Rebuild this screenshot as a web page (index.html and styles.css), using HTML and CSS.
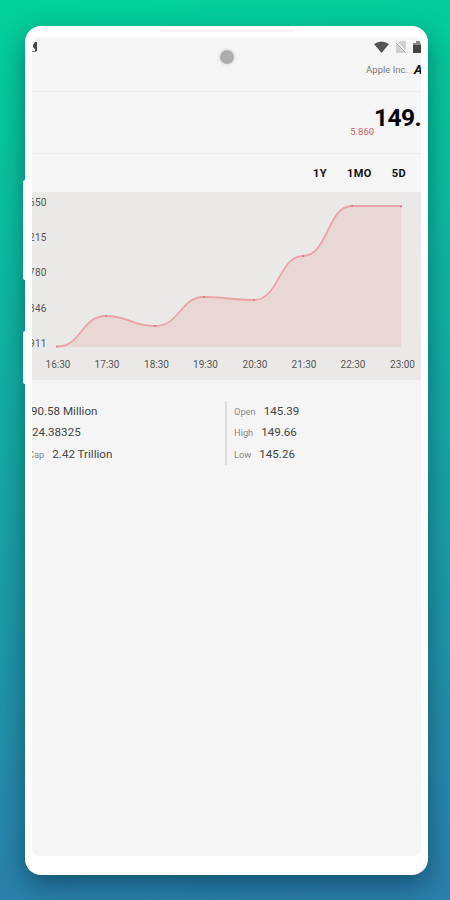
FILE: index.html
```html
<!DOCTYPE html>
<html lang="en">
<head>
    <meta charset="UTF-8">
    <meta name="viewport" content="width=device-width, initial-scale=1.0">
    <title>Stocks</title>
    <link rel="stylesheet" href="styles.css">
</head>
<body>
    <div class="phone">
        <span class="side-button volume"></span>
        <span class="side-button power"></span>
        <span class="speaker"></span>
        <span class="camera"></span>
        <div class="screen">
            <div class="topbar">
                <div class="status">
                    <svg class="clock" width="6" height="12" viewBox="0 0 6 12"><path d="M3 1h2v9L3 11V8L1 6V4z" fill="#444"/><path d="M0 10h3v1H0z" fill="#777"/></svg>
                    <div class="status-icons">
                        <svg width="15" height="12" viewBox="0 0 15 12"><path d="M0 3Q7.500-2 15 3L7.500 12z" fill="#555"/></svg>
                        <svg width="10" height="12" viewBox="0 0 10 12"><path d="M4 0h6v12H0V4z" fill="#d0d0d0"/><path d="M0 1l10 10" stroke="#f4f4f4" stroke-width="2"/><path d="M0 2l9 9" stroke="#a5a5a5"/></svg>
                        <svg width="8" height="12" viewBox="0 0 8 12"><path d="M3 0h4v2h1v10H0V2h3z" fill="#888"/><path d="M0 4h8v8H0z" fill="#444"/></svg>
                    </div>
                </div>
                <div class="company">
                    <span class="company-name">Apple Inc.</span>
                    <b class="symbol">A</b>
                </div>
            </div>
            <div class="quote">
                <span class="change">5.860</span>
                <b class="price">149.</b>
            </div>
            <div class="ranges">
                <span>1Y</span>
                <span>1MO</span>
                <span>5D</span>
            </div>
            <svg class="chart" width="389" height="188" viewBox="0 0 389 188">
                <path class="area" d="M25 155C50 155 49 124 74 124C98 124 98 134 123 134C148 134 148 105 172 105C197 105 197 108 222 108C247 108 247 64 271 64C296 64 295 14 320 14H369V155z"/>
                <path class="line" d="M25 154.500C50 154.500 49 124 74 124C98 124 98 134 123 134C148 134 148 105 172 105C197 105 197 108 222 108C247 108 247 64 271 64C296 64 295 14 320 14H370"/>
                <g class="dots">
                    <circle cx="25" cy="154.500" r="1"/>
                    <circle cx="74" cy="124" r="1"/>
                    <circle cx="123" cy="134" r="1"/>
                    <circle cx="172" cy="105" r="1"/>
                    <circle cx="222" cy="108" r="1"/>
                    <circle cx="271" cy="64" r="1"/>
                    <circle cx="320" cy="14" r="1"/>
                    <circle cx="369" cy="14.500" r="1"/>
                </g>
                <g class="y-labels">
                    <text x="-3" y="14">650</text>
                    <text x="-3" y="49">215</text>
                    <text x="-3" y="84">780</text>
                    <text x="-3" y="120">346</text>
                    <text x="-3" y="155">911</text>
                </g>
                <g class="x-labels">
                    <text x="26" y="175.500">16:30</text>
                    <text x="75" y="175.500">17:30</text>
                    <text x="124.500" y="175.500">18:30</text>
                    <text x="173.500" y="175.500">19:30</text>
                    <text x="223" y="175.500">20:30</text>
                    <text x="272" y="175.500">21:30</text>
                    <text x="321" y="175.500">22:30</text>
                    <text x="370.500" y="175.500">23:00</text>
                </g>
            </svg>
            <div class="stats">
                <div class="stats-left">
                    <div class="stat first">90.58 Million</div>
                    <div class="stat">24.38325</div>
                    <div class="stat cap"><span class="label">Cap</span>2.42 Trillion</div>
                </div>
                <div class="stats-right">
                    <div class="stat"><span class="label">Open</span>145.39</div>
                    <div class="stat"><span class="label">High</span>149.66</div>
                    <div class="stat"><span class="label">Low</span>145.26</div>
                </div>
            </div>
        </div>
    </div>
</body>
</html>
```
FILE: styles.css
```css
* {
    box-sizing: border-box;
}
body {
    margin: 0;
    height: 900px;
    padding: 26px 22px 25px 25px;
    overflow: hidden;
    background: linear-gradient(175deg, #02d199 0%, #04cb9b 8%, #2b7eac 98%);
    font-family: Roboto, 'Liberation Sans', sans-serif;
    color: #333;
}
.phone {
    position: relative;
    height: 849px;
    padding: 11px 7px 19px;
    border-radius: 16px;
    background: #fff;
    box-shadow: 0 10px 26px rgba(0, 40, 60, 0.5);
}
.side-button {
    position: absolute;
    left: -2px;
    width: 3px;
    background: #f8fbfa;
    border-radius: 2px 0 0 2px;
}
.volume {
    top: 154px;
    height: 100px;
}
.power {
    top: 305px;
    height: 53px;
}
.speaker {
    position: absolute;
    top: 4px;
    left: 135px;
    width: 134px;
    height: 2px;
    border-radius: 2px;
    background: #f5f5f5;
}
.camera {
    position: absolute;
    top: 24px;
    left: 195px;
    width: 14px;
    height: 14px;
    border-radius: 50%;
    background: #adadad;
    box-shadow: 0 0 0 2px #e9e9e9;
}
.screen {
    height: 819px;
    width: 389px;
    overflow: hidden;
    border-radius: 8px;
    background: #f5f5f5;
}
.topbar {
    height: 55px;
    padding-top: 4px;
    border-bottom: 1px solid #ececec;
}
.status {
    display: flex;
    justify-content: space-between;
    height: 12px;
}
.status-icons {
    display: flex;
    gap: 7px;
}
.company {
    display: flex;
    justify-content: flex-end;
    align-items: center;
    gap: 6px;
    height: 32px;
    margin-right: -3px;
}
.company-name {
    font-size: 9.5px;
    color: #777;
}
.symbol {
    width: 10px;
    font-size: 13px;
    font-style: italic;
    color: #111;
}
.quote {
    display: flex;
    justify-content: flex-end;
    height: 62px;
    border-bottom: 1px solid #ececec;
}
.change {
    padding-top: 34px;
    font-size: 9.5px;
    line-height: 12px;
    color: #cf5c62;
}
.price {
    padding-top: 11px;
    font-size: 24.5px;
    line-height: 30px;
    color: #000;
    letter-spacing: -0.6px;
}
.ranges {
    display: flex;
    justify-content: flex-end;
    align-items: center;
    gap: 20px;
    height: 38px;
    padding-right: 15px;
    font-size: 11px;
    font-weight: bold;
    letter-spacing: 0.4px;
    color: #111;
}
.chart {
    display: block;
    background: #eae9e8;
}
.area {
    fill: #e9d7d6;
}
.line {
    fill: none;
    stroke: #eaa4a7;
    stroke-width: 1.8;
}
.dots {
    fill: #cf777b;
}
.y-labels, .x-labels {
    font-size: 10px;
    fill: #555;
}
.y-labels {
    letter-spacing: 0.3px;
}
.x-labels {
    text-anchor: middle;
}
.stats {
    display: flex;
    margin-top: 21px;
}
.stats-left {
    width: 193px;
}
.stats-right {
    padding-left: 7px;
    border-left: 2px solid #dedede;
}
.stat {
    height: 21.3px;
    line-height: 21px;
    font-size: 11.6px;
    white-space: nowrap;
    color: #444;
}
.label {
    margin-right: 8px;
    font-size: 9.3px;
    color: #888;
}
.first {
    margin-left: -1px;
}
.cap {
    margin-left: -4px;
}
```
